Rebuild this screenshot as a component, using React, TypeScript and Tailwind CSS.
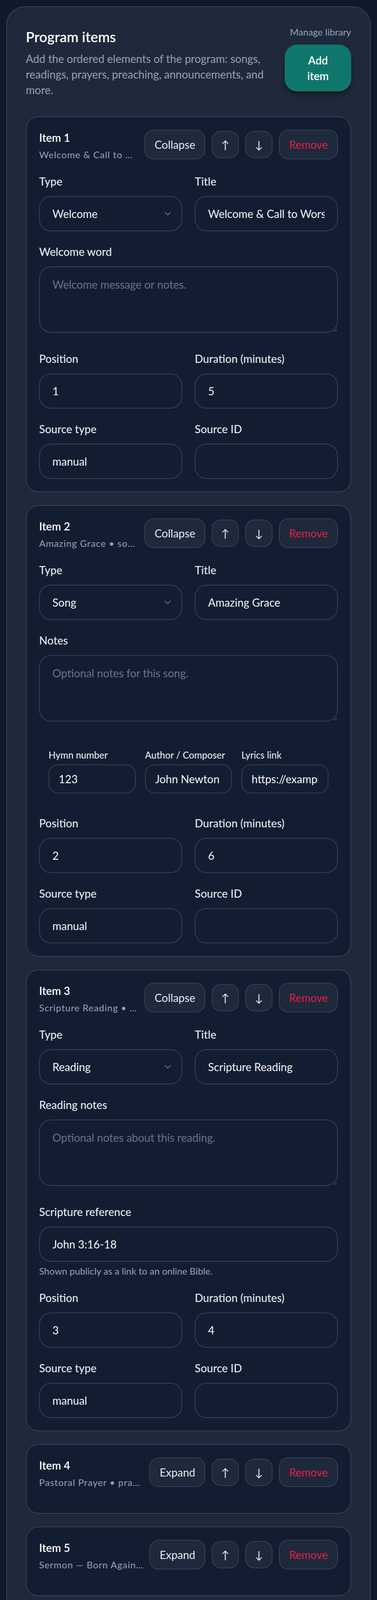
import React from 'react';

type Kind = 'welcome' | 'song' | 'reading' | 'other';

interface ProgramItem {
  id: number;
  kind: Kind;
  typeLabel: string;
  title: string;
  summary: string;
  position: number;
  duration: number;
  expanded: boolean;
}

const items: ProgramItem[] = [
  { id: 1, kind: 'welcome', typeLabel: 'Welcome', title: 'Welcome & Call to Worship', summary: 'Welcome & Call to Worship • welcome', position: 1, duration: 5, expanded: true },
  { id: 2, kind: 'song', typeLabel: 'Song', title: 'Amazing Grace', summary: 'Amazing Grace • song', position: 2, duration: 6, expanded: true },
  { id: 3, kind: 'reading', typeLabel: 'Reading', title: 'Scripture Reading', summary: 'Scripture Reading • reading', position: 3, duration: 4, expanded: true },
  { id: 4, kind: 'other', typeLabel: 'Prayer', title: 'Pastoral Prayer', summary: 'Pastoral Prayer • prayer', position: 4, duration: 5, expanded: false },
  { id: 5, kind: 'other', typeLabel: 'Sermon', title: 'Sermon — Born Again', summary: 'Sermon — Born Again • sermon', position: 5, duration: 30, expanded: false },
  { id: 6, kind: 'other', typeLabel: 'Offering', title: 'Offering', summary: 'Offering • offering', position: 6, duration: 5, expanded: false },
  { id: 7, kind: 'song', typeLabel: 'Song', title: 'How Great Thou Art', summary: 'How Great Thou Art • song', position: 7, duration: 5, expanded: false },
  { id: 8, kind: 'other', typeLabel: 'Announcements', title: 'Announcements', summary: 'Announcements • announcement', position: 8, duration: 5, expanded: false },
];

const inputCls =
  'h-[90px] w-full rounded-[30px] border-2 border-[#334155] bg-transparent px-8 text-[28px] text-[#f1f5f9] outline-none placeholder:text-[#64748b]';

const Label = ({ children }: { children: React.ReactNode }) => (
  <span className="text-[28px] leading-[40px] font-medium text-[#e2e8f0]">{children}</span>
);

const Field = ({ label, value, placeholder }: { label: string; value?: string; placeholder?: string }) => (
  <label className="flex flex-col gap-[18px]">
    <Label>{label}</Label>
    <input className={inputCls} defaultValue={value} placeholder={placeholder} />
  </label>
);

const NotesField = ({ label, placeholder }: { label: string; placeholder: string }) => (
  <label className="flex flex-col gap-[18px]">
    <Label>{label}</Label>
    <textarea
      rows={3}
      placeholder={placeholder}
      className="mb-[14px] block h-[170px] w-full resize-y rounded-[30px] border-2 border-[#334155] bg-transparent px-8 py-6 text-[28px] leading-[40px] text-[#f1f5f9] outline-none placeholder:text-[#64748b]"
    />
  </label>
);

const TypeSelect = ({ value }: { value: string }) => (
  <label className="flex flex-col gap-[18px]">
    <Label>Type</Label>
    <div className="relative">
      <select
        defaultValue={value}
        className="h-[90px] w-full appearance-none rounded-[30px] border-2 border-[#334155] bg-transparent px-8 text-[28px] text-[#f1f5f9] outline-none"
      >
        <option className="bg-[#131d31]">{value}</option>
      </select>
      {/* chevron */}
      <svg
        className="pointer-events-none absolute right-[28px] top-1/2 -translate-y-1/2"
        width="18"
        height="11"
        viewBox="0 0 18 11"
        fill="none"
      >
        <polyline points="2,2 9,9 16,2" stroke="#64748b" strokeWidth="2" strokeLinecap="round" strokeLinejoin="round" />
      </svg>
    </div>
  </label>
);

const btnCls =
  'rounded-[24px] border-2 border-[#334155] bg-[#1e293b] text-[28px] leading-[40px] text-[#e2e8f0]';

const ItemCard = ({ item }: { item: ProgramItem }) => (
  <div className="rounded-[32px] border-2 border-[#334155] bg-[#131d31] p-8">
    <div className="flex items-start justify-between gap-4">
      <div className="min-w-0 flex-1">
        <div className="text-[28px] leading-[40px] font-semibold text-white">Item {item.id}</div>
        <div className="mt-2 truncate text-2xl tracking-[1px] text-[#94a3b8]">{item.summary}</div>
      </div>
      <div className="flex shrink-0 items-center gap-4">
        <button className={`${btnCls} px-6 py-4`}>{item.expanded ? 'Collapse' : 'Expand'}</button>
        <button className={`${btnCls} flex size-[70px] items-center justify-center`}>↑</button>
        <button className={`${btnCls} flex size-[70px] items-center justify-center`}>↓</button>
        <button className={`${btnCls} px-6 py-4 text-[#e11d48]`}>Remove</button>
      </div>
    </div>

    {item.expanded ? (
      <div className="mt-8 flex flex-col gap-8">
        <div className="grid grid-cols-2 gap-8">
          <TypeSelect value={item.typeLabel} />
          <Field label="Title" value={item.title} />
        </div>

        {item.kind === 'welcome' && <NotesField label="Welcome word" placeholder="Welcome message or notes." />}

        {item.kind === 'song' && (
          <>
            <NotesField label="Notes" placeholder="Optional notes for this song." />
            <div className="grid grid-cols-3 gap-6 rounded-[24px] p-6">
              {[
                ['Hymn number', '123'],
                ['Author / Composer', 'John Newton'],
                ['Lyrics link', 'https://example.com/amazing-grace'],
              ].map(([l, v]) => (
                <label key={l} className="flex min-w-0 flex-col gap-2">
                  <span className="whitespace-nowrap text-2xl font-medium text-[#e2e8f0]">{l}</span>
                  <input
                    defaultValue={v}
                    className="h-[74px] w-full rounded-[24px] border-2 border-[#334155] bg-transparent px-6 text-[28px] text-[#f1f5f9] outline-none"
                  />
                </label>
              ))}
            </div>
          </>
        )}

        {item.kind === 'reading' && (
          <>
            <NotesField label="Reading notes" placeholder="Optional notes about this reading." />
            <label className="flex flex-col gap-[18px]">
              <Label>Scripture reference</Label>
              <div>
                <input className={inputCls} defaultValue="John 3:16-18" />
                <p className="mt-2 text-2xl text-[#94a3b8]">Shown publicly as a link to an online Bible.</p>
              </div>
            </label>
          </>
        )}

        <div className="grid grid-cols-2 gap-8">
          <Field label="Position" value={String(item.position)} />
          <Field label="Duration (minutes)" value={String(item.duration)} />
        </div>
        <div className="grid grid-cols-2 gap-8">
          <Field label="Source type" value="manual" />
          <Field label="Source ID" value="" />
        </div>
      </div>
    ) : (
      <div className="mt-[30px]" />
    )}
  </div>
);

export default function App() {
  return (
    <div className="bg-[#111a2c] p-4 font-[Lato,sans-serif]">
      <section className="rounded-[48px] border-2 border-[#334155] bg-[#1f293b] p-12 shadow-2xl">
        <div className="flex items-start justify-between gap-8">
          <div className="min-w-0 flex-1">
            <h2 className="text-4xl leading-[56px] font-semibold text-white">Program items</h2>
            <p className="mt-2 text-[28px] leading-[40px] text-[#94a3b8]">
              Add the ordered elements of the program: songs,
              <br />
              readings, prayers, preaching, announcements, and
              <br />
              more.
            </p>
          </div>
          <div className="flex w-[170px] shrink-0 flex-col items-end gap-4">
            <a className="text-2xl text-[#94a3b8]">Manage library</a>
            <button className="w-[170px] rounded-[32px] bg-[#0f766e] px-10 py-5 text-[28px] leading-[40px] font-semibold text-white shadow-lg shadow-black/40">
              Add item
            </button>
          </div>
        </div>

        <div className="mt-12 flex flex-col gap-[33px]">
          {items.map((item) => (
            <ItemCard key={item.id} item={item} />
          ))}
        </div>
      </section>
    </div>
  );
}
